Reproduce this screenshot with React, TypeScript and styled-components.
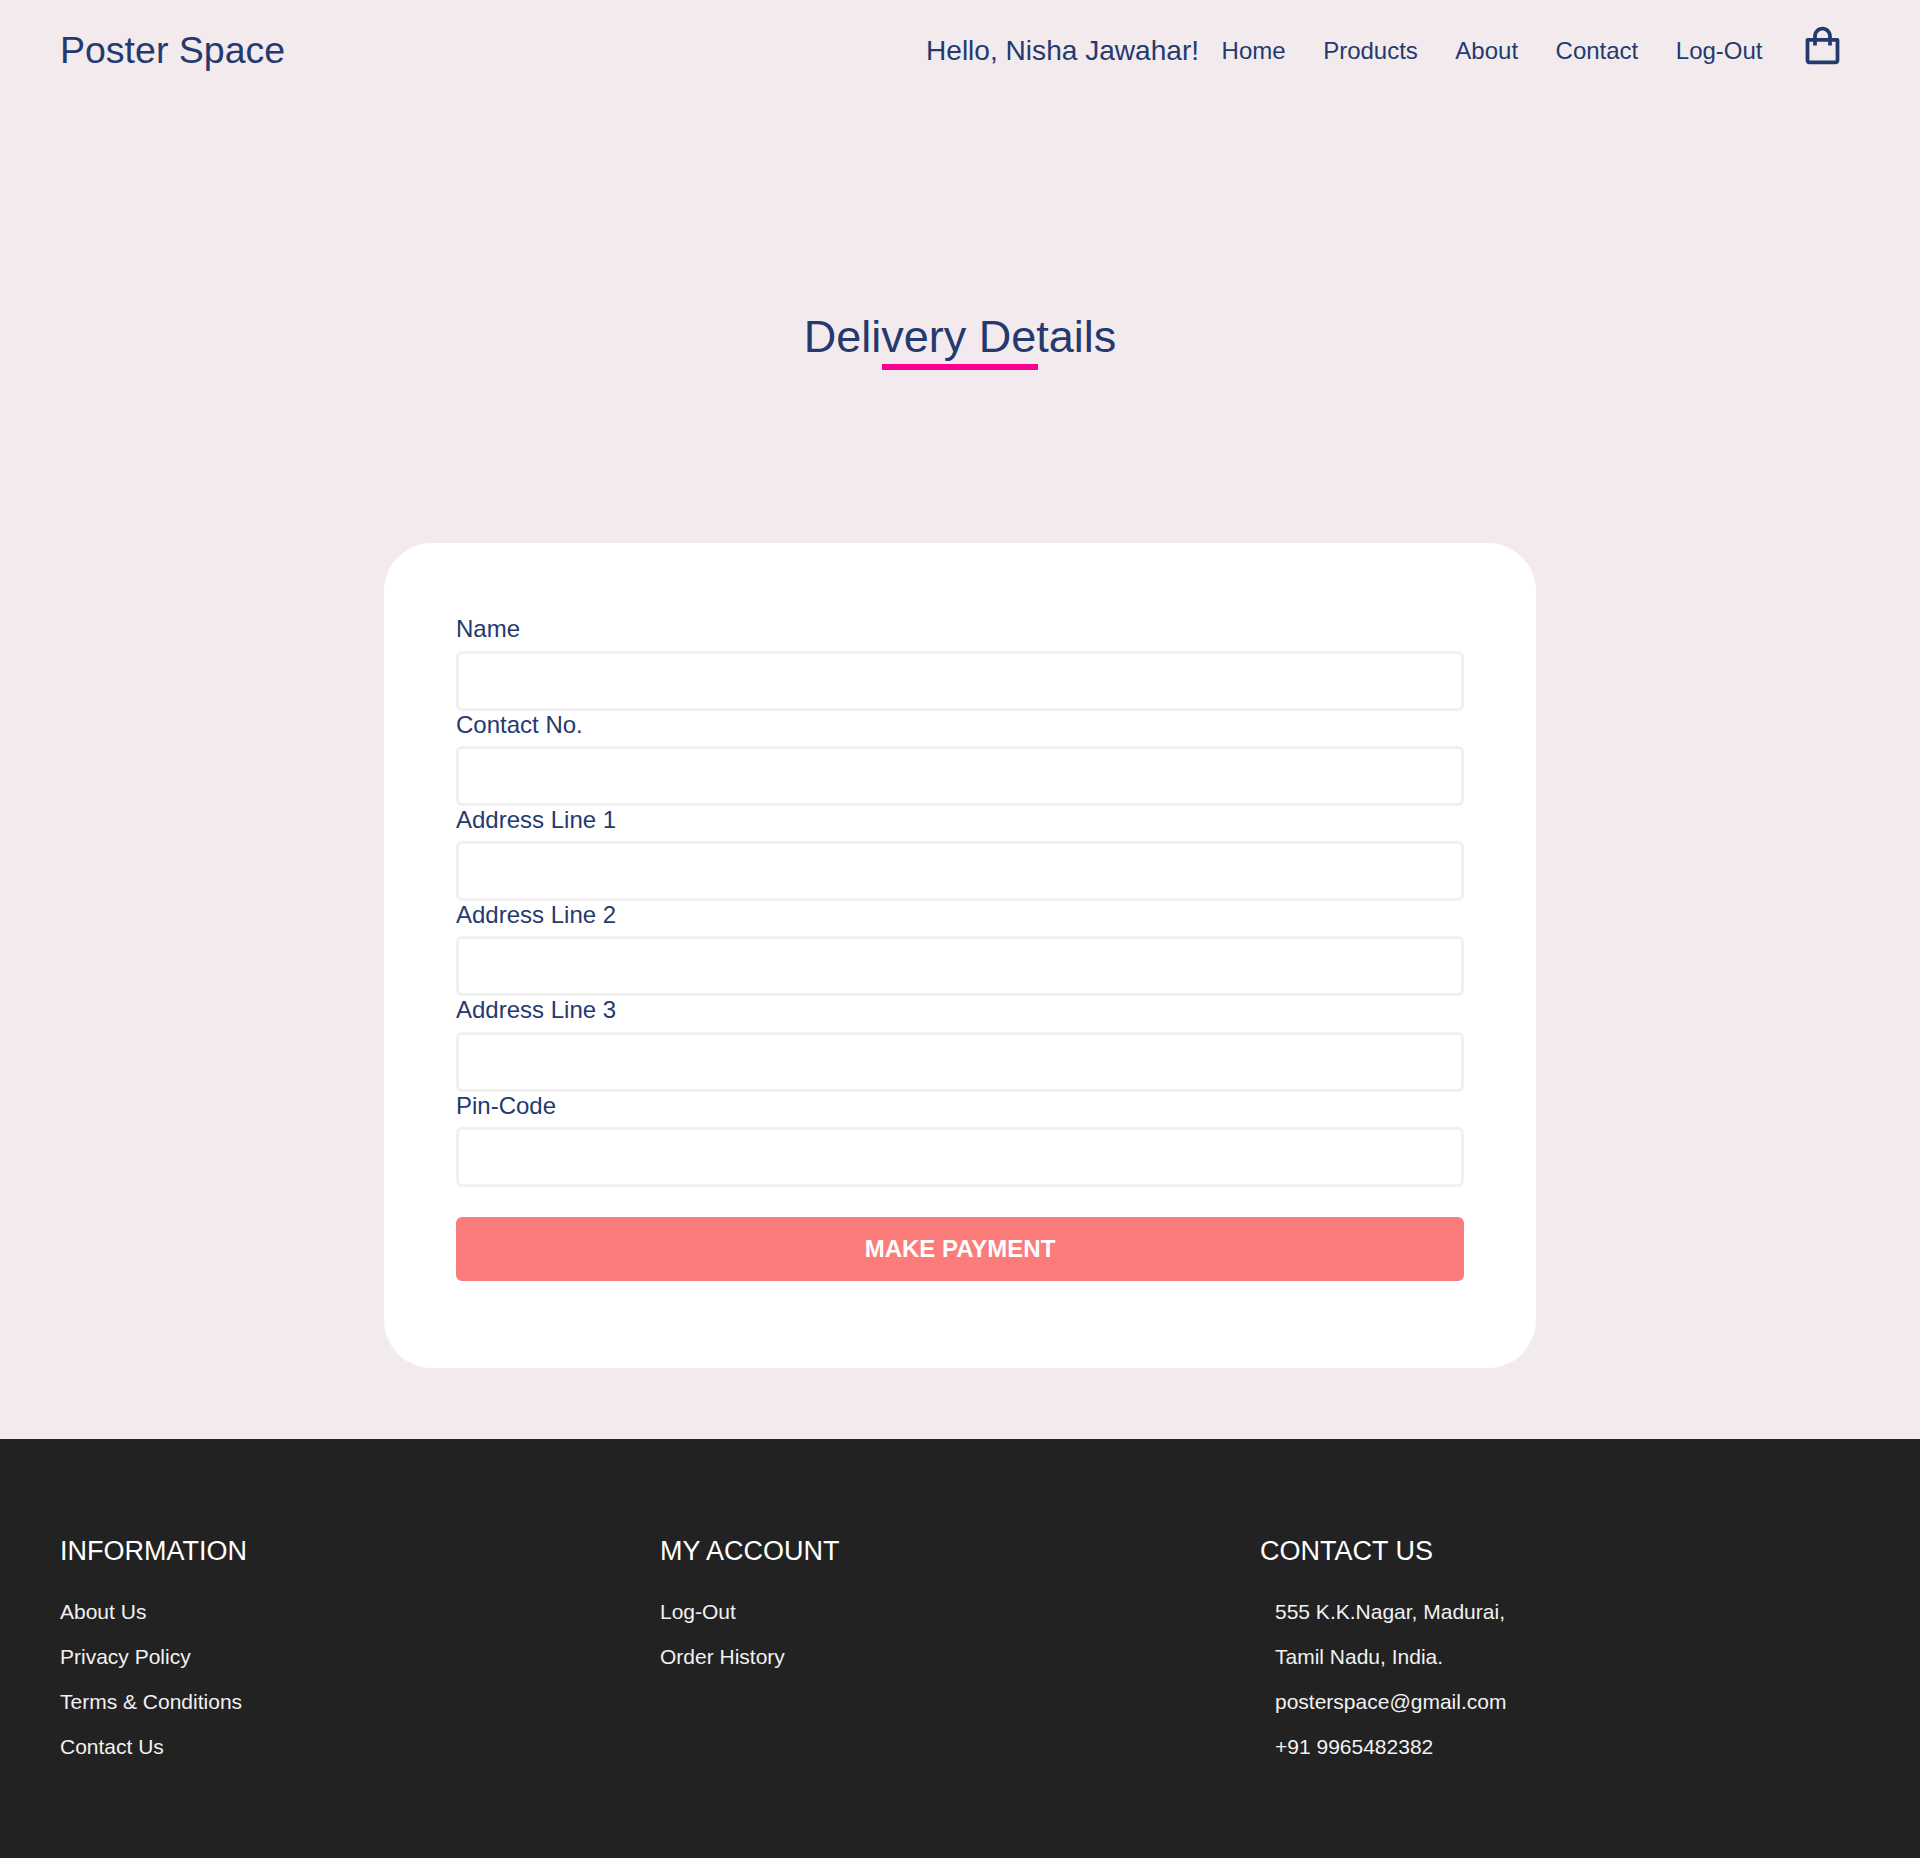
import React from 'react';
import styled, { createGlobalStyle } from 'styled-components';

const NAVY = '#243a6f';

const GlobalStyle = createGlobalStyle`
  *, *::before, *::after { box-sizing: border-box; margin: 0; padding: 0; }
  body {
    background: #f3eaed;
    color: ${NAVY};
    font-family: Arial, "Liberation Sans", sans-serif;
    font-size: 24px;
    line-height: 27px;
  }
  a { color: inherit; text-decoration: none; }
  ul { list-style: none; }
`;

const Header = styled.header`
  display: flex;
  align-items: center;
  justify-content: space-between;
  height: 100px;
  padding: 0 75px 0 60px;
`;

const Logo = styled.a`
  font-size: 37.5px;
  line-height: 42px;
`;

const Nav = styled.nav`
  display: flex;
  align-items: center;
  padding-top: 1px;
`;

const Greeting = styled.h3`
  font-size: 28.08px;
  font-weight: 400;
  line-height: 31px;
  margin-right: 22.5px;
`;

const NavList = styled.ul`
  display: flex;
  align-items: center;
  gap: 37.5px;
`;

const CartLink = styled.a`
  display: block;
  height: 45px;
  margin: -10px 0 0 37.5px;
`;

const Main = styled.main`
  display: flex;
  flex-direction: column;
  align-items: center;
  padding: 211px 0 71.3px;
`;

const Title = styled.h1`
  display: flex;
  flex-direction: column;
  align-items: center;
  font-size: 45px;
  font-weight: 400;
  line-height: 51px;

  &::after {
    content: "";
    width: 50%;
    height: 6px;
    margin-top: 2px;
    background: #f90093;
  }
`;

const Card = styled.form`
  width: 60%;
  margin-top: 173.4px;
  padding: 72px 72px 87.1px;
  background: #fff;
  border-radius: 48px;
`;

const Label = styled.label`
  display: block;
`;

const Input = styled.input`
  display: block;
  width: 100%;
  height: 60px;
  margin-top: 8.25px;
  padding: 0 15px;
  border: 3px solid #f0f0f0;
  border-radius: 6px;
  background: #fff;
  font: inherit;
  color: inherit;
  outline: none;
`;

const PayButton = styled.button`
  display: block;
  width: 100%;
  height: 64px;
  margin-top: 29.7px;
  border: 0;
  border-radius: 6px;
  background: #fc7c7c;
  color: #fff;
  font: 700 24px/27px Arial, "Liberation Sans", sans-serif;
  text-transform: uppercase;
`;

const Footer = styled.footer`
  display: grid;
  grid-template-columns: repeat(3, 1fr);
  height: 419px;
  padding: 96px 60px 0;
  background: #222;
  color: #fff;
`;

const FooterTitle = styled.h3`
  margin-bottom: 22px;
  font-size: 27px;
  font-weight: 400;
  line-height: 32px;
  text-transform: uppercase;
`;

const FooterList = styled.ul<{ $indent?: boolean }>`
  padding-left: ${({ $indent }) => ($indent ? '15px' : '0')};
  color: #f1f1f1;
  font-size: 21px;
  line-height: 45px;
`;

const BagIcon = () => (
  <svg width="45" height="45" viewBox="0 0 24 24" fill={NAVY} aria-hidden="true">
    <path d="M5 22h14c1.103 0 2-.897 2-2V9a1 1 0 0 0-1-1h-3V7c0-2.757-2.243-5-5-5S7 4.243 7 7v1H4a1 1 0 0 0-1 1v11c0 1.103.897 2 2 2zM9 7c0-1.654 1.346-3 3-3s3 1.346 3 3v1H9V7zm-4 3h2v2h2v-2h6v2h2v-2h2v10H5V10z" />
  </svg>
);

const navItems = ['Home', 'Products', 'About', 'Contact', 'Log-Out'];
const fields = ['Name', 'Contact No.', 'Address Line 1', 'Address Line 2', 'Address Line 3', 'Pin-Code'];

export default function App() {
  return (
    <>
      <GlobalStyle />
      <Header>
        <Logo href="#">Poster Space</Logo>
        <Nav>
          <Greeting>Hello, Nisha Jawahar!</Greeting>
          <NavList>
            {navItems.map((item) => (
              <li key={item}><a href="#">{item}</a></li>
            ))}
          </NavList>
          <CartLink href="#"><BagIcon /></CartLink>
        </Nav>
      </Header>
      <Main>
        <Title>Delivery Details</Title>
        <Card onSubmit={(e) => e.preventDefault()}>
          {fields.map((field) => (
            <Label key={field}>
              {field}
              <Input type="text" />
            </Label>
          ))}
          <PayButton type="submit">Make Payment</PayButton>
        </Card>
      </Main>
      <Footer>
        <section>
          <FooterTitle>Information</FooterTitle>
          <FooterList>
            <li><a href="#">About Us</a></li>
            <li><a href="#">Privacy Policy</a></li>
            <li><a href="#">Terms &amp; Conditions</a></li>
            <li><a href="#">Contact Us</a></li>
          </FooterList>
        </section>
        <section>
          <FooterTitle>My Account</FooterTitle>
          <FooterList>
            <li><a href="#">Log-Out</a></li>
            <li><a href="#">Order History</a></li>
          </FooterList>
        </section>
        <section>
          <FooterTitle>Contact Us</FooterTitle>
          <FooterList $indent>
            <li>555 K.K.Nagar, Madurai,</li>
            <li>Tamil Nadu, India.</li>
            <li>posterspace@gmail.com</li>
            <li>+91 9965482382</li>
          </FooterList>
        </section>
      </Footer>
    </>
  );
}
